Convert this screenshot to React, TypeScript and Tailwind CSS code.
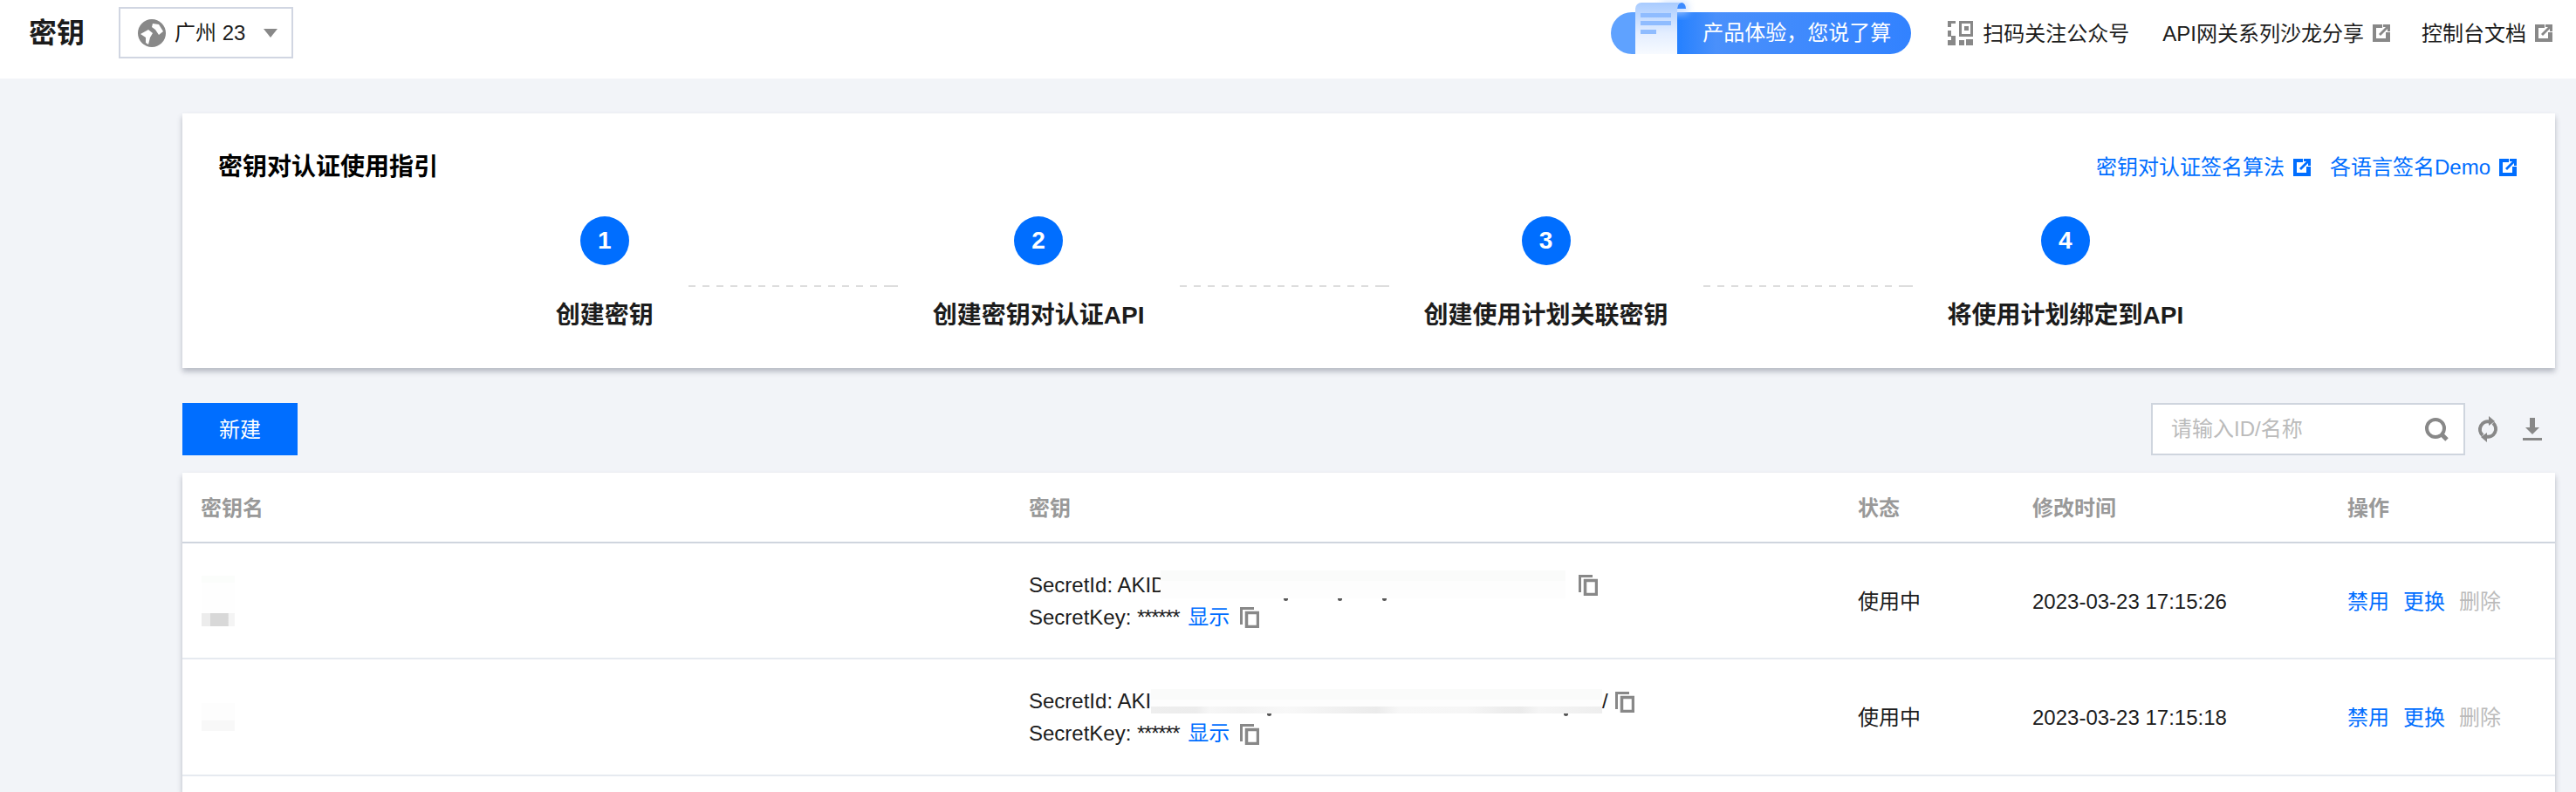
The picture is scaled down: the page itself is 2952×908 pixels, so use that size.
import React from 'react';

const BLUE = '#006eff';

const LinkIcon: React.FC<{ color?: string }> = ({ color = '#888888' }) => (
  <svg width="20" height="20" viewBox="0 0 20 20" className="shrink-0">
    <rect width="20" height="20" fill={color} />
    <rect x="4" y="4" width="11" height="12" fill="#fff" />
    <rect x="11" y="0" width="9" height="9" fill="#fff" />
    <path d="M12 0h8v8h-3V5l-8 8-2-2 8-8h-3z" fill={color} />
  </svg>
);

const CopyIcon: React.FC = () => (
  <svg width="22" height="24" viewBox="0 0 22 24" className="shrink-0 translate-y-[1px]">
    <path d="M0 0h16v3H3v17H0z" fill="#888888" />
    <rect x="7.5" y="6.5" width="13" height="16" fill="none" stroke="#888888" strokeWidth="3.5" />
  </svg>
);

const GlobeIcon: React.FC = () => (
  <svg width="32" height="32" viewBox="0 0 32 32" className="shrink-0">
    <circle cx="16" cy="16" r="16" fill="#888888" />
    <path d="M3 17l9-5 5 4-3 5-2 8-3-2v-6z" fill="#fff" />
    <path d="M17 5l7 1 5 8-5 4-4-6-4-3z" fill="#fff" />
  </svg>
);

const QrIcon: React.FC = () => (
  <svg width="29" height="28" viewBox="0 0 29 28" fill="#888888" className="shrink-0">
    <path d="M0 0h9v3H4v4H0z" />
    <rect x="0" y="11" width="4" height="7" />
    <rect x="4" y="17" width="5" height="5" />
    <rect x="0" y="22" width="9" height="6" />
    <rect x="13" y="22" width="6" height="6" />
    <rect x="21" y="21" width="8" height="7" />
    <path fillRule="evenodd" d="M13 0h16v18H13zM16 3v12h10V3z" />
    <rect x="19" y="6" width="5" height="5" />
  </svg>
);

const PaperArt: React.FC = () => (
  <svg width="86" height="62" viewBox="0 0 86 62" className="absolute left-[18px] top-[-14px]">
    <defs>
      <linearGradient id="paper" x1="0" y1="0" x2="0" y2="1">
        <stop offset="0" stopColor="#a8cbff" />
        <stop offset="0.6" stopColor="#e4eeff" />
        <stop offset="1" stopColor="#f7faff" />
      </linearGradient>
      <filter id="glow" x="-50%" y="-50%" width="200%" height="200%">
        <feGaussianBlur stdDeviation="5" />
      </filter>
    </defs>
    <rect x="40" y="2" width="30" height="14" fill="#bcd6ff" opacity="0.8" filter="url(#glow)" />
    <path d="M58 10a5 7 0 0 1 10 0z" fill="#3d8bff" />
    <path d="M10 10a7 7 0 0 1 7-7h46a5 7 0 0 0-5 7v52H10z" fill="url(#paper)" />
    <rect x="16" y="15" width="35" height="5" fill="#8fbcff" />
    <rect x="16" y="24" width="35" height="5" fill="#8fbcff" />
    <rect x="16" y="34" width="18" height="5" fill="#8fbcff" />
  </svg>
);

const steps = ['创建密钥', '创建密钥对认证API', '创建使用计划关联密钥', '将使用计划绑定到API'];

// 打码的密钥片段
const Redacted: React.FC<{ width: number; height: number; band?: boolean; marks: number[] }> = ({ width, height, band, marks }) => (
  <span className="relative inline-block shrink-0 bg-[#fdfdfd]" style={{ width, height }}>
    <span className="absolute left-0 right-0 top-0 h-[12px] bg-[#fafbfa]" />
    {band && (
      <span className="absolute bottom-0 left-0 right-0 h-[8px] bg-[linear-gradient(90deg,#eeeeee_0%,#ececec_10%,#f6f6f6_13%,#f2f2f2_20%,#f8f8f8_30%,#f0f0f0_42%,#ebebeb_50%,#f7f7f7_55%,#f6f6f6_70%,#ededed_78%,#ebebeb_82%,#f5f5f5_86%,#eeeeee_100%)]" />
    )}
    {marks.map((m) => (
      <span key={m} className="absolute bottom-[-3px] h-[3px] w-[5px] rounded-b bg-[#555555]" style={{ left: m }} />
    ))}
  </span>
);

const rows = [
  { h: 'h-[133px]', time: '2023-03-23 17:15:26', prefix: 'SecretId: AKID', overlap: '-ml-[5px]', prefixEnd: 'w-[156px]', blur: 464, tail: '', band: false, marks: [141, 203, 254] },
  { h: 'h-[134px]', time: '2023-03-23 17:15:18', prefix: 'SecretId: AKI', overlap: '-ml-[0px]', prefixEnd: 'w-[140px]', blur: 517, tail: '/', band: true, marks: [133, 473] },
];

const columns = 'grid grid-cols-[950px_949px_200px_361px_259px]';

export default function App() {
  return (
    <div className="flex h-[908px] w-full flex-col overflow-hidden bg-[#f2f4f8] font-['Liberation_Sans','Noto_Sans_CJK_SC',sans-serif] text-[24px] text-[#1c1c1c]">
      {/* Header */}
      <header className="flex h-[90px] shrink-0 items-center justify-between bg-white pb-[15px] pl-[33px] pr-[27px]">
        <div className="flex items-center gap-[39px]">
          <h1 className="w-[64px] text-[32px] font-bold leading-[44px]">密钥</h1>
          <div className="flex h-[59px] w-[200px] items-center border-2 border-[#d1d6e2] pl-[20px]">
            <GlobeIcon />
            <span className="ml-[10px] w-[102px] whitespace-nowrap">广州 23</span>
            <svg width="16" height="10" viewBox="0 0 16 10">
              <path d="M0 0h16L8 10z" fill="#888888" />
            </svg>
          </div>
        </div>
        <div className="flex items-center">
          <div className="relative flex h-[48px] w-[344px] items-center rounded-full bg-[linear-gradient(90deg,#5fa2ff_0%,#5fa2ff_8%,#2480ff_22%,#4a90fb_35%,#3282ff_100%)] pl-[105px] text-white">
            <PaperArt />
            产品体验，您说了算
          </div>
          <div className="ml-[42px] flex items-center gap-[11px]">
            <QrIcon />
            <span className="pt-[2px]">扫码关注公众号</span>
          </div>
          <div className="ml-[38px] flex items-center gap-[10px]">
            <span className="pt-[2px]">API网关系列沙龙分享</span>
            <LinkIcon />
          </div>
          <div className="ml-[36px] flex items-center gap-[10px]">
            <span className="pt-[2px]">控制台文档</span>
            <LinkIcon />
          </div>
        </div>
      </header>

      <main className="flex min-h-0 flex-1 flex-col pl-[209px] pr-[24px] pt-[40px]">
        {/* Guide card */}
        <section className="h-[292px] shrink-0 bg-white pl-[41px] pr-[44px] pt-[42px] shadow-[0_4px_6px_rgba(54,58,80,0.32)]">
          <div className="flex h-[40px] items-center justify-between">
            <h2 className="text-[28px] font-bold text-black">密钥对认证使用指引</h2>
            <div className="flex items-center gap-[22px] text-[#006eff]">
              <a className="flex items-center gap-[10px]">
                密钥对认证签名算法
                <LinkIcon color={BLUE} />
              </a>
              <a className="flex items-center gap-[10px]">
                各语言签名Demo
                <LinkIcon color={BLUE} />
              </a>
            </div>
          </div>
          <div className="mt-[36px] flex items-start justify-center pl-[5px]">
            {steps.map((label, i) => (
              <React.Fragment key={label}>
                {i > 0 && (
                  <div className="mx-[40px] mt-[79px] flex h-[2px] w-[240px]">
                    <div className="flex-1 bg-[repeating-linear-gradient(90deg,#dddddd_0,#dddddd_8px,transparent_8px,transparent_16px)]" />
                    <div className="w-[16px] bg-[#dddddd]" />
                  </div>
                )}
                <div className="flex flex-col items-center">
                  <div className="flex h-[56px] w-[56px] items-center justify-center rounded-full bg-[#006eff] text-[28px] font-bold text-white">
                    {i + 1}
                  </div>
                  <div className="mt-[38px] whitespace-nowrap text-[28px] font-bold leading-[40px]">{label}</div>
                </div>
              </React.Fragment>
            ))}
          </div>
        </section>

        {/* Toolbar */}
        <div className="mt-[40px] flex h-[60px] shrink-0 items-center justify-between pr-[15px]">
          <button className="flex h-[60px] w-[132px] items-center justify-center bg-[#006eff] pt-[2px] text-white">新建</button>
          <div className="flex items-center">
            <div className="flex h-[60px] w-[360px] items-center justify-between border-2 border-[#cfd5de] bg-white pl-[21px] pr-[17px]">
              <span className="text-[#bbbbbb]">请输入ID/名称</span>
              <svg width="27" height="27" viewBox="0 0 27 27" fill="none" stroke="#888888">
                <circle cx="12" cy="12" r="10" strokeWidth="4" />
                <path d="M19 19l6 6" strokeWidth="5" />
              </svg>
            </div>
            <svg width="24" height="32" viewBox="0 0 24 32" className="ml-[14px]" fill="#888888">
              <path d="M14 7.5A9 9 0 0 0 6 23" fill="none" stroke="#888888" strokeWidth="4" />
              <path d="M10 24.5A9 9 0 0 0 18 9" fill="none" stroke="#888888" strokeWidth="4" />
              <path d="M13 1l7 6-7 5z" />
              <path d="M11 31l-7-6 7-5z" />
            </svg>
            <svg width="22" height="26" viewBox="0 0 22 26" className="ml-[28px]" fill="#888888">
              <path d="M8 0h6v11h5l-8 8-8-8h5z" />
              <rect x="0" y="23" width="22" height="3" />
            </svg>
          </div>
        </div>

        {/* Table */}
        <section className="mt-[20px] min-h-0 flex-1 bg-white shadow-[0_4px_6px_rgba(54,58,80,0.32)]">
          <div className={`${columns} h-[81px] items-center border-b-2 border-[#cfd5de] pt-[3px] font-bold text-[#999999]`}>
            <div className="pl-[21px]">密钥名</div>
            <div className="pl-[20px]">密钥</div>
            <div className="pl-[21px]">状态</div>
            <div className="pl-[21px]">修改时间</div>
            <div className="pl-[21px]">操作</div>
          </div>
          {rows.map((row, idx) => (
            <div key={row.time} className={`${columns} ${row.h} items-center border-b-2 border-[#e6eaf0]`}>
              <div className="pl-[22px]">
                {idx === 0 ? (
                  <div className="flex w-[38px] flex-col">
                    <div className="h-[8px] bg-[#fbfdfb]" />
                    <div className="h-[35px] bg-[#fefefe]" />
                    <div className="h-[15px] bg-[linear-gradient(90deg,#ececec_0%,#ececec_26%,#d8d8d8_27%,#d8d8d8_80%,#f4f4f4_81%,#f4f4f4_100%)]" />
                  </div>
                ) : (
                  <div className="flex w-[38px] flex-col">
                    <div className="h-[20px] bg-[#fdfdfd]" />
                    <div className="h-[12px] bg-[#f8f8f8]" />
                  </div>
                )}
              </div>
              <div className="pl-[20px] leading-[37px]">
                <div className="flex h-[37px] items-center">
                  <span className={`${row.prefixEnd} shrink-0 whitespace-nowrap`}>{row.prefix}</span>
                  <span className={`${row.overlap} flex shrink-0 items-center`}>
                    <Redacted width={row.blur} height={idx === 0 ? 32 : 28} band={row.band} marks={row.marks} />
                  </span>
                  <span className="w-[15px] shrink-0 text-left">{row.tail}</span>
                  <CopyIcon />
                </div>
                <div className="flex h-[37px] items-center">
                  <span className="whitespace-nowrap">
                    SecretKey: <span className="tracking-[-1.3px]">******</span>
                  </span>
                  <span className="ml-[10px] text-[#006eff]">显示</span>
                  <span className="ml-[12px]">
                    <CopyIcon />
                  </span>
                </div>
              </div>
              <div className="pl-[21px] pt-[2px]">使用中</div>
              <div className="pl-[21px] pt-[2px]">{row.time}</div>
              <div className="flex gap-4 pl-[21px] pt-[2px] text-[#006eff]">
                <span>禁用</span>
                <span>更换</span>
                <span className="text-[#bbbbbb]">删除</span>
              </div>
            </div>
          ))}
        </section>
      </main>
    </div>
  );
}
